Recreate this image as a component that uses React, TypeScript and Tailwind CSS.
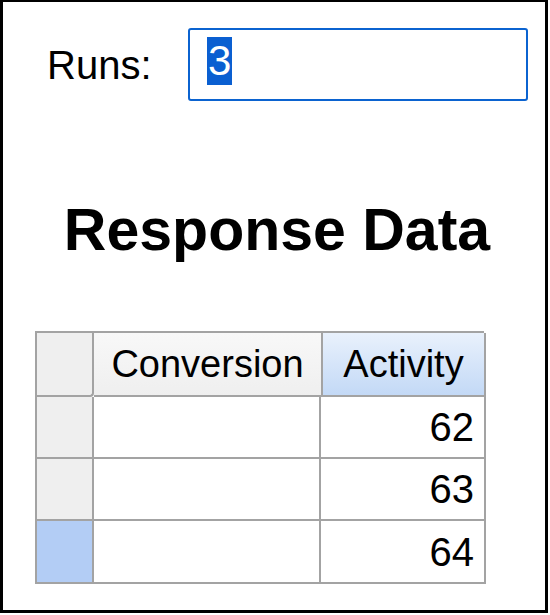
import React from 'react';

const rows = [62, 63, 64];

export default function App() {
  return (
    <div className="w-[550px] h-[615px] bg-white" style={{ fontFamily: '"Liberation Sans", Arial, sans-serif' }}>
      <div className="w-[548px] h-[613px] border-l-[3px] border-t-2 border-r-[3px] border-b-[3px] border-black flex flex-col">
        <div className="flex items-center pt-[26px] pl-[44px]">
          <span className="text-[40px] leading-none text-black w-[141px]">Runs:</span>
          <div className="w-[340px] h-[73px] border-2 border-[#0b63d0] rounded-[3px] flex items-start pt-[7px] pl-[17px]">
            <span className="bg-[#0a5fd1] text-white text-[42px] leading-[48px] px-[1px]">3</span>
          </div>
        </div>

        <h1 className="mt-[100px] text-center text-[59px] font-bold leading-none text-black pl-[6px]">Response Data</h1>

        <div className="mt-[71px] ml-[32px] w-[449px] grid grid-cols-[57px_227px_165px] grid-rows-[64px_62px_62px_63px] border-l-2 border-t-2 border-[#a3a3a3]">
          <div className="bg-[#efefef] border-r-2 border-b-2 border-[#a3a3a3] rounded-br-[4px]" />
          <div className="bg-gradient-to-b from-[#f8f8f8] to-[#efefef] border-b-2 border-[#a3a3a3] flex items-center justify-center text-[38px] text-black">
            Conversion
          </div>
          <div className="bg-gradient-to-b from-[#e9f1fc] to-[#c3d9f6] border-l-2 border-r-2 border-b-2 border-[#a3a3a3] flex items-center justify-center text-[38px] text-black">
            Activity
          </div>
          {rows.map((v, i) => (
            <React.Fragment key={v}>
              <div className={`${i === 2 ? 'bg-[#b3cdf5]' : 'bg-[#efefef]'} border-r-2 border-b-2 border-[#a3a3a3]`} />
              <div className="bg-white border-r-2 border-b-2 border-[#a3a3a3]" />
              <div className="bg-white border-r-2 border-b-2 border-[#a3a3a3] flex items-center justify-end pr-[10px] text-[40px] text-black">
                {v}
              </div>
            </React.Fragment>
          ))}
        </div>
      </div>
    </div>
  );
}
